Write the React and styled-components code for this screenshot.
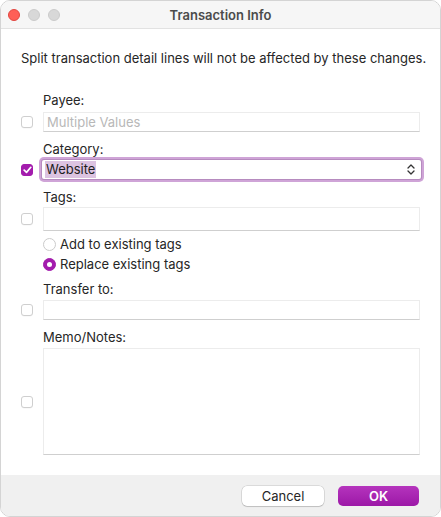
import React from "react";
import styled, { createGlobalStyle } from "styled-components";

const Global = createGlobalStyle`
  html, body { margin: 0; padding: 0; background: #ffffff; }
  body { font-family: Inter, "Liberation Sans", Arial, sans-serif; -webkit-font-smoothing: antialiased; }
  * { box-sizing: border-box; }
`;

const Window = styled.div`
  width: 441px;
  height: 517px;
  display: flex;
  flex-direction: column;
  background: #ffffff;
  border-radius: 10px;
  overflow: hidden;
  border: 1px solid #d4d4d4;
`;

const TitleBar = styled.div`
  height: 28px;
  flex: none;
  display: flex;
  align-items: center;
  position: relative;
  background: #f6f6f6;
  border-bottom: 1px solid #e2e2e2;
  padding-left: 7px;
`;

const Lights = styled.div`
  display: flex;
  gap: 8px;
`;

const Light = styled.span`
  width: 12px;
  height: 12px;
  border-radius: 50%;
  background: ${(p) => p.$color};
  border: 0.5px solid ${(p) => p.$edge};
`;

const Title = styled.div`
  position: absolute;
  left: 0;
  right: 0;
  text-align: center;
  font-size: 13px;
  font-weight: 600;
  color: #4b4b4b;
  pointer-events: none;
`;

const Body = styled.div`
  flex: 1;
  display: flex;
  flex-direction: column;
  padding: 21px 20px 0 20px;
`;

const Description = styled.p`
  margin: 0;
  font-size: 13px;
  line-height: 16px;
  color: #262626;
  white-space: nowrap;
`;

const Group = styled.div`
  display: grid;
  grid-template-columns: 12px 1fr;
  column-gap: 10px;
  align-items: center;
  margin-top: ${(p) => p.$top}px;
`;

const Label = styled.div`
  grid-column: 2;
  font-size: 13px;
  line-height: 16px;
  color: #262626;
  margin-bottom: ${(p) => p.$gap ?? 4}px;
`;

const Check = styled.span`
  grid-column: 1;
  width: 12px;
  height: 12px;
  border-radius: 3px;
  display: flex;
  align-items: center;
  justify-content: center;
  background: ${(p) => (p.$on ? "#a31cad" : "#ffffff")};
  border: 1px solid ${(p) => (p.$on ? "#a31cad" : "#cfcfcf")};
  box-shadow: ${(p) => (p.$on ? "none" : "0 0.5px 0 rgba(0,0,0,0.05)")};
`;

const Field = styled.div`
  grid-column: 2;
  height: ${(p) => p.$h}px;
  background: #ffffff;
  border: 1px solid #ececec;
  border-bottom-color: #cfcfcf;
  font-size: 13px;
  line-height: 18px;
  padding: 0 3px;
  color: ${(p) => (p.$placeholder ? "#b8b8b8" : "#262626")};
  display: flex;
  align-items: center;
`;

const SelectBox = styled.div`
  grid-column: 2;
  height: 19px;
  margin: 0 -1px 0 -1px;
  background: #ffffff;
  border-radius: 2px;
  box-shadow: 0 0 0 1px #b68bbf, 0 0 0 3px #cfa4d7;
  display: flex;
  align-items: center;
  justify-content: space-between;
  padding: 0 6px 0 3px;
  font-size: 13px;
  color: #1e1e1e;
`;

const Selected = styled.span`
  background: #dcc3e1;
  line-height: 17px;
  padding: 0 1px;
`;

const RadioList = styled.div`
  grid-column: 2;
  display: flex;
  flex-direction: column;
  gap: 4px;
  margin-top: 5px;
`;

const RadioRow = styled.div`
  display: flex;
  align-items: center;
  gap: 4px;
  font-size: 13px;
  line-height: 16px;
  color: #262626;
`;

const RadioDot = styled.span`
  width: 13px;
  height: 13px;
  border-radius: 50%;
  flex: none;
  background: ${(p) => (p.$on ? "#a31cad" : "#ffffff")};
  border: 1px solid ${(p) => (p.$on ? "#a31cad" : "#cbcbcb")};
  display: flex;
  align-items: center;
  justify-content: center;
  &::after {
    content: "";
    width: 5px;
    height: 5px;
    border-radius: 50%;
    background: #ffffff;
    display: ${(p) => (p.$on ? "block" : "none")};
  }
`;

const Footer = styled.div`
  flex: none;
  height: 41px;
  background: #f0f0f0;
  display: flex;
  justify-content: flex-end;
  align-items: flex-start;
  gap: 14px;
  padding: 11px 21px 0 0;
`;

const Button = styled.button`
  width: ${(p) => p.$w}px;
  height: 20px;
  border-radius: 5px;
  font-family: inherit;
  font-size: 13px;
  padding: 0;
  border: none;
  ${(p) =>
    p.$primary
      ? `background: linear-gradient(#b534bd, #9c18a7); color: #ffffff; font-weight: 600;`
      : `background: #ffffff; color: #262626; box-shadow: 0 0 0 0.5px rgba(0,0,0,0.18), 0 1px 1px rgba(0,0,0,0.12);`}
`;

const Tick = () => (
  <svg width="9" height="8" viewBox="0 0 9 8">
    <path d="M1.2 4.2 L3.5 6.4 L7.8 1.3" fill="none" stroke="#fff" strokeWidth="1.7" strokeLinecap="round" strokeLinejoin="round" />
  </svg>
);

const Chevrons = () => (
  <svg width="8" height="11" viewBox="0 0 8 11">
    <path d="M1 4 L4 1 L7 4 M1 7 L4 10 L7 7" fill="none" stroke="#333" strokeWidth="1.3" strokeLinecap="round" strokeLinejoin="round" />
  </svg>
);

export default function App() {
  return (
    <>
      <Global />
      <Window>
        <TitleBar>
          <Lights>
            <Light $color="#fe5f57" $edge="#e14640" />
            <Light $color="#d8d8d8" $edge="#cbcbcb" />
            <Light $color="#d8d8d8" $edge="#cbcbcb" />
          </Lights>
          <Title>Transaction Info</Title>
        </TitleBar>
        <Body>
          <Description>Split transaction detail lines will not be affected by these changes.</Description>

          <Group $top={26}>
            <Label>Payee:</Label>
            <Check />
            <Field $h={20} $placeholder>Multiple Values</Field>
          </Group>

          <Group $top={9}>
            <Label $gap={3}>Category:</Label>
            <Check $on><Tick /></Check>
            <SelectBox>
              <Selected>Website</Selected>
              <Chevrons />
            </SelectBox>
          </Group>

          <Group $top={10}>
            <Label $gap={2}>Tags:</Label>
            <Check />
            <Field $h={24} />
            <RadioList>
              <RadioRow><RadioDot />Add to existing tags</RadioRow>
              <RadioRow><RadioDot $on />Replace existing tags</RadioRow>
            </RadioList>
          </Group>

          <Group $top={9}>
            <Label $gap={3}>Transfer to:</Label>
            <Check />
            <Field $h={20} />
          </Group>

          <Group $top={9}>
            <Label $gap={3}>Memo/Notes:</Label>
            <Check />
            <Field $h={107} />
          </Group>
        </Body>
        <Footer>
          <Button $w={82}>Cancel</Button>
          <Button $w={81} $primary>OK</Button>
        </Footer>
      </Window>
    </>
  );
}
